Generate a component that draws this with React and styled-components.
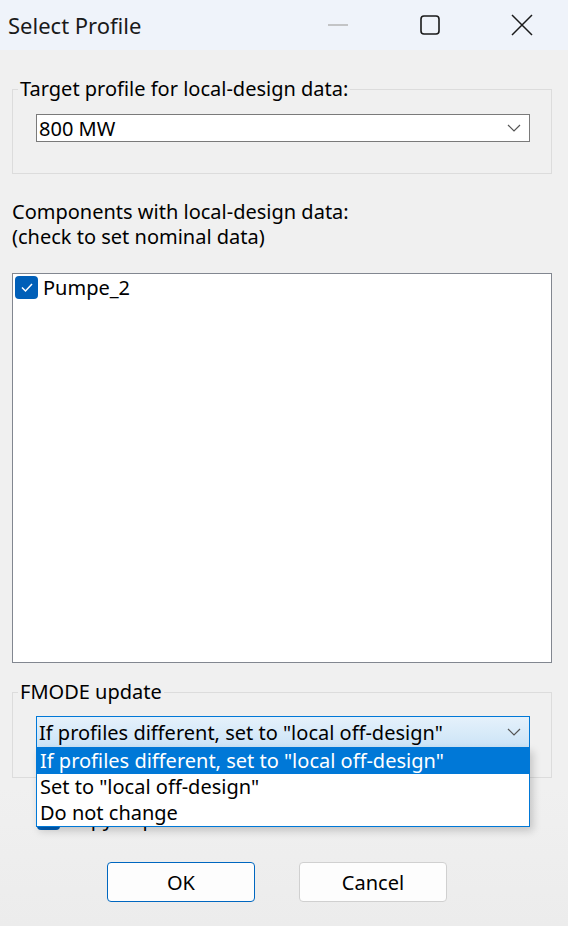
import React from "react";
import styled, { createGlobalStyle } from "styled-components";

const Global = createGlobalStyle`
  html, body { margin: 0; padding: 0; background: #f0f0f0; }
  body { font-family: "Noto Sans", "Open Sans", sans-serif; color: #000; }
  #root { width: 568px; height: 926px; }
`;

const Window = styled.div`
  width: 568px;
  height: 926px;
  display: flex;
  flex-direction: column;
  background: linear-gradient(#f0f0f0 85%, #ececec);
  overflow: hidden;
`;

const TitleBar = styled.div`
  height: 50px;
  flex: none;
  display: flex;
  align-items: center;
  background: #eff3fa;
`;

const Title = styled.div`
  flex: 1;
  padding-left: 8px;
  font-size: 22px;
  color: #1a1a1a;
`;

const CtrlButton = styled.div`
  width: 92px;
  height: 50px;
  display: flex;
  align-items: center;
  justify-content: center;
`;

const Body = styled.div`
  display: flex;
  flex-direction: column;
  padding: 0 16px 0 12px;
`;

const Group = styled.fieldset`
  margin: ${(p) => p.$mt}px 0 0;
  padding: 0 21px ${(p) => p.$pb}px 5px;
  border: 1px solid #dcdcdc;
  min-width: 0;
`;

const Legend = styled.legend`
  padding: 0 2px;
  font-size: 20px;
  line-height: 24px;
`;

const Combo = styled.div`
  position: relative;
  box-sizing: border-box;
  width: 494px;
  height: ${(p) => p.$h}px;
  margin: ${(p) => p.$mt}px 0 0 18px;
  padding-left: 2px;
  display: flex;
  align-items: center;
  font-size: 20px;
  border: 1px solid ${(p) => (p.$open ? "#0078d7" : "#7a7a7a")};
  background: ${(p) =>
    p.$open ? "linear-gradient(#e5f1fb, #cce4f7)" : "#fff"};
  z-index: 2;
`;

const ComboText = styled.span`
  flex: 1;
  white-space: nowrap;
`;

const Chevron = styled.svg`
  width: 14px;
  height: 8px;
  margin-right: 8px;
  flex: none;
`;

const DropList = styled.div`
  position: absolute;
  top: 100%;
  left: -1px;
  width: 494px;
  box-sizing: border-box;
  border: 1px solid #0078d7;
  background: #fff;
  box-shadow: 3px 4px 8px rgba(0, 0, 0, 0.18);
`;

const DropItem = styled.div`
  height: 26px;
  line-height: 26px;
  padding-left: 3px;
  font-size: 20px;
  white-space: nowrap;
  background: ${(p) => (p.$sel ? "#0078d7" : "#fff")};
  color: ${(p) => (p.$sel ? "#fff" : "#000")};
`;

const Label = styled.div`
  margin-top: 25px;
  font-size: 20px;
  line-height: 25px;
`;

const ListBox = styled.div`
  margin-top: 24px;
  height: 390px;
  box-sizing: border-box;
  border: 1px solid #828790;
  background: #fff;
  padding: 2px;
`;

const CheckRow = styled.div`
  display: flex;
  align-items: center;
  gap: ${(p) => p.$gap}px;
  margin-top: ${(p) => p.$mt || 0}px;
  padding-left: ${(p) => p.$pl || 0}px;
  font-size: 20px;
  line-height: 23px;
`;

const Box = styled.div`
  width: 23px;
  height: 23px;
  flex: none;
  border-radius: 4px;
  background: #005fb8;
  display: flex;
  align-items: center;
  justify-content: center;
`;

const ButtonRow = styled.div`
  display: flex;
  gap: 44px;
  margin-top: 32px;
  padding-left: 95px;
`;

const Button = styled.div`
  box-sizing: border-box;
  width: 148px;
  height: 40px;
  display: flex;
  align-items: center;
  justify-content: center;
  font-size: 20px;
  border-radius: 4px;
  background: #fdfdfd;
  border: 1px solid ${(p) => (p.$primary ? "#0067c0" : "#d0d0d0")};
`;

const ChevronIcon = () => (
  <Chevron viewBox="0 0 14 8">
    <path d="M1 1 L7 7 L13 1" fill="none" stroke="#555" strokeWidth="1.2" />
  </Chevron>
);

const Check = () => (
  <svg width="14" height="11" viewBox="0 0 14 11">
    <path d="M2 5.5 L5.5 9 L12 2" fill="none" stroke="#fff" strokeWidth="1.5" />
  </svg>
);

export default function App() {
  return (
    <>
      <Global />
      <Window>
        <TitleBar>
          <Title>Select Profile</Title>
          <CtrlButton>
            <svg width="20" height="4" viewBox="0 0 20 4">
              <path d="M0 2 H20" stroke="#b4b4b4" strokeWidth="1.5" />
            </svg>
          </CtrlButton>
          <CtrlButton>
            <svg width="20" height="20" viewBox="0 0 20 20">
              <rect x="1" y="1" width="18" height="18" rx="3" fill="none" stroke="#1a1a1a" strokeWidth="1.6" />
            </svg>
          </CtrlButton>
          <CtrlButton>
            <svg width="22" height="22" viewBox="0 0 22 22">
              <path d="M1 1 L21 21 M21 1 L1 21" stroke="#1a1a1a" strokeWidth="1.5" />
            </svg>
          </CtrlButton>
        </TitleBar>
        <Body>
          <Group $mt={27} $pb={31}>
            <Legend>Target profile for local-design data:</Legend>
            <Combo $h={28} $mt={13}>
              <ComboText>800 MW</ComboText>
              <ChevronIcon />
            </Combo>
          </Group>
          <Label>
            Components with local-design data:
            <br />
            (check to set nominal data)
          </Label>
          <ListBox>
            <CheckRow $gap={5}>
              <Box>
                <Check />
              </Box>
              Pumpe_2
            </CheckRow>
          </ListBox>
          <Group $mt={17} $pb={29}>
            <Legend>FMODE update</Legend>
            <Combo $h={32} $mt={12} $open>
              <ComboText>If profiles different, set to "local off-design"</ComboText>
              <ChevronIcon />
              <DropList>
                <DropItem $sel>If profiles different, set to "local off-design"</DropItem>
                <DropItem>Set to "local off-design"</DropItem>
                <DropItem>Do not change</DropItem>
              </DropList>
            </Combo>
          </Group>
          <CheckRow $gap={6} $mt={29} $pl={25}>
            <Box>
              <Check />
            </Box>
            Copy to profile
          </CheckRow>
          <ButtonRow>
            <Button $primary>OK</Button>
            <Button>Cancel</Button>
          </ButtonRow>
        </Body>
      </Window>
    </>
  );
}
